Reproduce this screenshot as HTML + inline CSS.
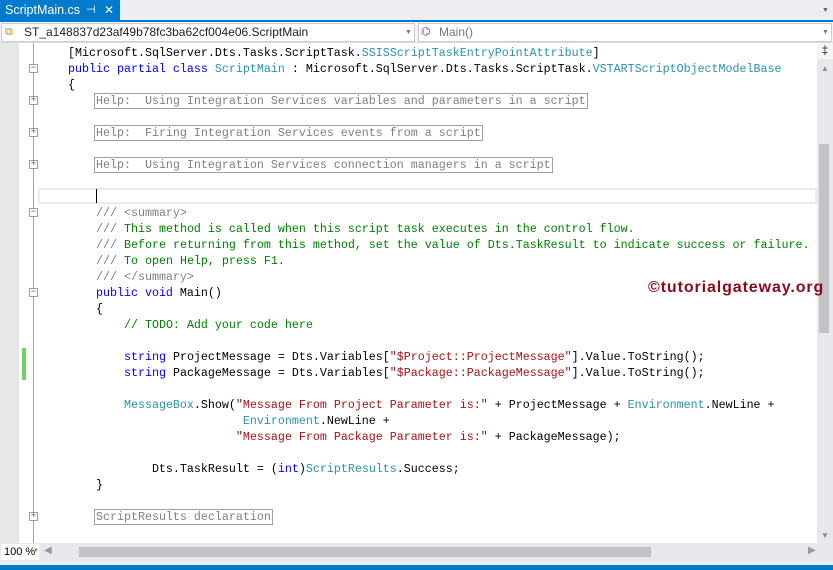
<!DOCTYPE html>
<html><head><style>
*{margin:0;padding:0;box-sizing:border-box}
body{width:833px;height:570px;background:#eeeef2;position:relative;overflow:hidden;font-family:"Liberation Sans",sans-serif}
.abs{position:absolute}
pre{font-family:"Liberation Mono",monospace;font-size:11.67px;line-height:16px;color:#000}
.k{color:#0000ff}.t{color:#2b91af}.s{color:#a31515}.c{color:#008000}.g{color:#808080}
.h{color:#808080;border:1px solid #a0a0a0;padding:0 1px;margin-left:-2px}
.ob{position:absolute;left:29px;width:9px;height:9px;border:1px solid #a0a0a0;background:#fff;font-size:9px;line-height:7px;text-align:center;color:#555;font-family:"Liberation Mono",monospace}
</style></head><body>
<div class="abs" style="left:0;top:0;width:120px;height:21px;background:#007acc;color:#fff;font-size:12.5px;line-height:21px;padding-left:5px;white-space:nowrap">ScriptMain.cs<span style="position:absolute;left:86px;font-size:11px">⊣</span><span style="position:absolute;left:104px;font-size:12px">✕</span></div>
<div class="abs" style="left:0;top:20px;width:833px;height:2px;background:#007acc"></div>
<div class="abs" style="left:822px;top:7px;font-size:7px;color:#666">▼</div>
<div class="abs" style="left:0;top:22px;width:833px;height:21px;background:#f5f5f5;border-bottom:1px solid #ddd"></div>
<div class="abs" style="left:1px;top:23px;width:414px;height:19px;background:#fff;border:1px solid #ccc;font-size:12px;line-height:17px;padding-left:22px;color:#1e1e1e">ST_a148837d23af49b78fc3ba62cf004e06.ScriptMain</div>
<div class="abs" style="left:5px;top:27px;width:12px;height:10px;color:#d67f1e;font-size:11px;line-height:10px">⧉</div>
<div class="abs" style="left:405px;top:29px;font-size:7px;color:#777">▼</div>
<div class="abs" style="left:418px;top:23px;width:414px;height:19px;background:#fff;border:1px solid #ccc;font-size:12px;line-height:17px;padding-left:20px;color:#777">Main()</div>
<div class="abs" style="left:421px;top:25px;font-size:11px;color:#8a3ca0">⌬</div>
<div class="abs" style="left:822px;top:29px;font-size:7px;color:#777">▼</div>
<!-- editor -->
<div class="abs" style="left:0;top:43px;width:817px;height:500px;background:#fff"></div>
<div class="abs" style="left:0;top:43px;width:19px;height:500px;background:#e6e7e8"></div>
<div class="abs" style="left:33px;top:43px;width:1px;height:500px;background:#a5a5a5"></div>
<div class="abs" style="left:22px;top:348px;width:4px;height:32px;background:#6fd26b"></div>
<div class="abs" style="left:38px;top:188px;width:779px;height:16px;border:2px solid #eaeaf2"></div>
<div class="abs" style="left:96px;top:189px;width:1px;height:14px;background:#000"></div>
<div class="ob" style="top:64px">−</div>
<div class="ob" style="top:96px">+</div>
<div class="ob" style="top:128px">+</div>
<div class="ob" style="top:160px">+</div>
<div class="ob" style="top:208px">−</div>
<div class="ob" style="top:288px">−</div>
<div class="ob" style="top:512px">+</div>
<pre class="abs" style="left:68px;top:45px">[Microsoft.SqlServer.Dts.Tasks.ScriptTask.<span class="t">SSISScriptTaskEntryPointAttribute</span>]
<span class="k">public partial class</span> <span class="t">ScriptMain</span> : Microsoft.SqlServer.Dts.Tasks.ScriptTask.<span class="t">VSTARTScriptObjectModelBase</span>
{
    <span class="h">Help:  Using Integration Services variables and parameters in a script</span>

    <span class="h">Help:  Firing Integration Services events from a script</span>

    <span class="h">Help:  Using Integration Services connection managers in a script</span>


    <span class="g">/// &lt;summary&gt;</span>
    <span class="g">///</span> <span class="c">This method is called when this script task executes in the control flow.</span>
    <span class="g">///</span> <span class="c">Before returning from this method, set the value of Dts.TaskResult to indicate success or failure.</span>
    <span class="g">///</span> <span class="c">To open Help, press F1.</span>
    <span class="g">/// &lt;/summary&gt;</span>
    <span class="k">public void</span> Main()
    {
        <span class="c">// TODO: Add your code here</span>

        <span class="k">string</span> ProjectMessage = Dts.Variables[<span class="s">"$Project::ProjectMessage"</span>].Value.ToString();
        <span class="k">string</span> PackageMessage = Dts.Variables[<span class="s">"$Package::PackageMessage"</span>].Value.ToString();

        <span class="t">MessageBox</span>.Show(<span class="s">"Message From Project Parameter is:"</span> + ProjectMessage + <span class="t">Environment</span>.NewLine +
                         <span class="t">Environment</span>.NewLine +
                        <span class="s">"Message From Package Parameter is:"</span> + PackageMessage);

            Dts.TaskResult = (<span class="k">int</span>)<span class="t">ScriptResults</span>.Success;
    }

    <span class="h">ScriptResults declaration</span></pre>
<!-- vscroll -->
<div class="abs" style="left:817px;top:43px;width:16px;height:500px;background:#e8e8ec"></div>
<div class="abs" style="left:817px;top:43px;width:16px;height:16px;background:#f5f5f5;font-size:12px;line-height:14px;text-align:center;color:#222">‡</div>
<div class="abs" style="left:821px;top:64px;font-size:8px;color:#888">▲</div>
<div class="abs" style="left:819px;top:144px;width:10px;height:189px;background:#c2c3c9"></div>
<div class="abs" style="left:821px;top:531px;font-size:8px;color:#888">▼</div>
<div class="abs" style="left:648px;top:279px;font-size:16px;letter-spacing:0.9px;font-weight:bold;color:#8b0a1a;font-family:'Liberation Sans',sans-serif;white-space:nowrap">©tutorialgateway.org</div>
<!-- hscroll -->
<div class="abs" style="left:0;top:543px;width:833px;height:18px;background:#e8e8ec"></div>
<div class="abs" style="left:1px;top:544px;width:38px;height:16px;background:#fff;font-size:11px;line-height:16px;padding-left:3px">100 %</div>
<div class="abs" style="left:33px;top:548px;font-size:6px;color:#777">▼</div>
<div class="abs" style="left:44px;top:545px;font-size:10px;color:#999">◀</div>
<div class="abs" style="left:79px;top:547px;width:572px;height:10px;background:#c2c3c9"></div>
<div class="abs" style="left:808px;top:545px;font-size:10px;color:#999">▶</div>
<div class="abs" style="left:0;top:565px;width:833px;height:5px;background:#007acc"></div>
</body></html>
